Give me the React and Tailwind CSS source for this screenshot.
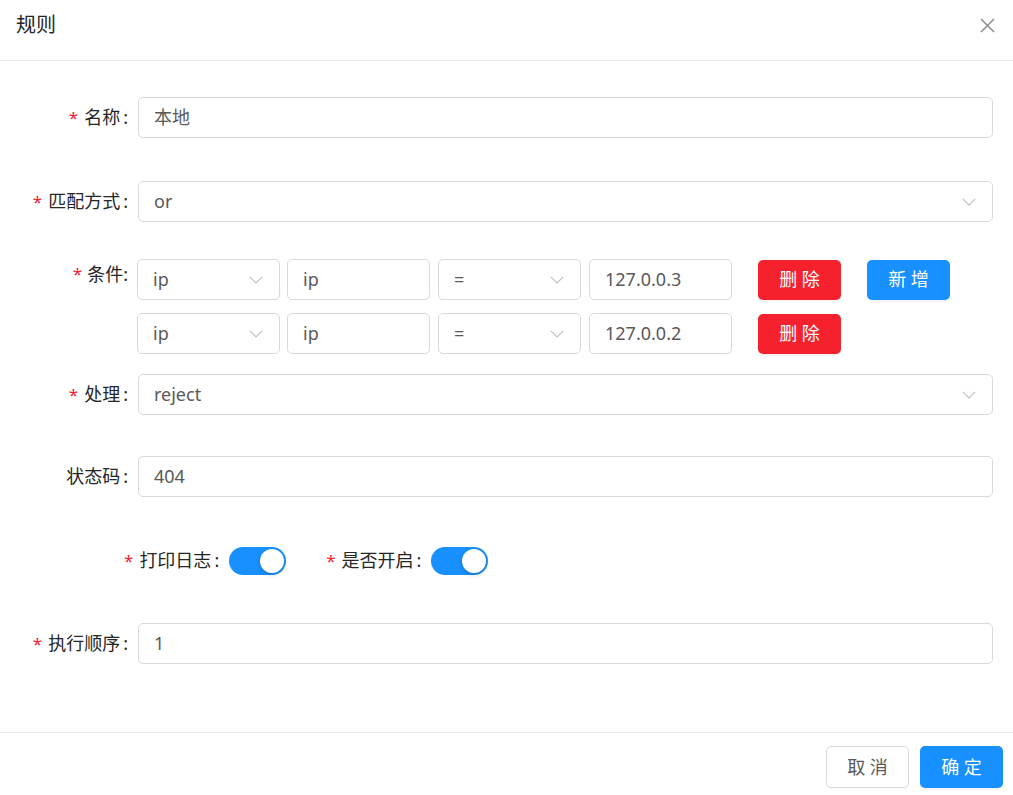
import React from "react";

const FONT = "font-['Noto_Sans','Noto_Sans_CJK_SC',sans-serif]";

function Chevron() {
  return (
    <svg width="14" height="8" viewBox="0 0 14 8" fill="none">
      <polyline points="0.8,0.8 7,7 13.2,0.8" stroke="#bfbfbf" strokeWidth="1.2" />
    </svg>
  );
}

function Label({ req, text }) {
  return (
    <div className="w-[138px] shrink-0 flex justify-end items-center text-[18px] text-[#262626]">
      {req && <span className="text-[#f5222d] mr-[6px] text-[17px]">*</span>}
      <span>{text}</span>
      <span className="ml-[3px] mr-[10px]">:</span>
    </div>
  );
}

function Box({ children, select, className = "" }) {
  return (
    <div
      className={
        "h-[41px] border border-[#d9d9d9] rounded-[5px] flex items-center justify-between pl-[15px] pr-[16px] text-[18px] text-[#595959] bg-white " +
        className
      }
    >
      <span>{children}</span>
      {select && <Chevron />}
    </div>
  );
}

function Btn({ color, children }) {
  return (
    <div
      className={
        "h-[40px] w-[83px] rounded-[5px] flex items-center justify-center text-white text-[18px] shadow-[0_2px_0_rgba(0,0,0,0.045)] " +
        color
      }
    >
      {children}
    </div>
  );
}

function Switch() {
  return (
    <div className="w-[57px] h-[28px] rounded-full bg-[#1890ff] relative shrink-0">
      <div className="absolute right-[2px] top-[2px] w-[24px] h-[24px] rounded-full bg-white shadow-[0_2px_4px_rgba(0,35,11,0.2)]" />
    </div>
  );
}

function CondRow({ ip, add }) {
  return (
    <div className="flex items-center">
      <Box select className="w-[143px]">ip</Box>
      <Box className="w-[143px] ml-[7px]">ip</Box>
      <Box select className="w-[143px] ml-[8px]">=</Box>
      <Box className="w-[143px] ml-[8px]">{ip}</Box>
      <div className="ml-[26px]">
        <Btn color="bg-[#f5222d]">删 除</Btn>
      </div>
      {add && (
        <div className="ml-[26px]">
          <Btn color="bg-[#1890ff]">新 增</Btn>
        </div>
      )}
    </div>
  );
}

export default function App() {
  return (
    <div className={"w-[1013px] h-[795px] bg-white overflow-hidden flex flex-col " + FONT}>
      <div className="h-[61px] border-b border-[#e8e8e8] flex items-center justify-between pl-[16px] pr-[18px] pb-[10px] shrink-0">
        <div className="text-[20px] text-[#262626]">规则</div>
        <svg width="15" height="15" viewBox="0 0 15 15">
          <path d="M1 1L14 14M14 1L1 14" stroke="#8c8c8c" strokeWidth="1.5" />
        </svg>
      </div>

      <div className="flex flex-col pt-[36px] pr-[20px] h-[671px] shrink-0">
        <div className="flex items-center">
          <Label req text="名称" />
          <Box className="flex-1">本地</Box>
        </div>

        <div className="flex items-center mt-[43px]">
          <Label req text="匹配方式" />
          <Box select className="flex-1">or</Box>
        </div>

        <div className="flex mt-[37px]">
          <div className="w-[137px] shrink-0 flex justify-end items-start pt-[2px] pr-[9px] text-[18px] text-[#262626]">
            <span className="text-[#f5222d] mr-[5px] text-[17px]">*</span>
            <span>条件:</span>
          </div>
          <div className="flex flex-col gap-[13px]">
            <CondRow ip="127.0.0.3" add />
            <CondRow ip="127.0.0.2" />
          </div>
        </div>

        <div className="flex items-center mt-[20px]">
          <Label req text="处理" />
          <Box select className="flex-1">reject</Box>
        </div>

        <div className="flex items-center mt-[41px]">
          <Label text="状态码" />
          <Box className="flex-1">404</Box>
        </div>

        <div className="flex items-center mt-[43px] h-[41px] ml-[124px] text-[18px] text-[#262626]">
          <span className="text-[#f5222d] mr-[6px] text-[17px]">*</span>
          <span>打印日志</span>
          <span className="ml-[3px] mr-[10px]">:</span>
          <Switch />
          <span className="text-[#f5222d] mr-[6px] ml-[40px] text-[17px]">*</span>
          <span>是否开启</span>
          <span className="ml-[3px] mr-[10px]">:</span>
          <Switch />
        </div>

        <div className="flex items-center mt-[42px]">
          <Label req text="执行顺序" />
          <Box className="flex-1">1</Box>
        </div>
      </div>

      <div className="border-t border-[#e8e8e8] flex justify-end items-start pt-[13px] pr-[10px] gap-[11px] flex-1">
        <div className="h-[42px] w-[83px] rounded-[5px] border border-[#d9d9d9] bg-white flex items-center justify-center text-[18px] text-[#595959] shadow-[0_2px_0_rgba(0,0,0,0.015)]">
          取 消
        </div>
        <div className="h-[42px] w-[83px] rounded-[5px] bg-[#1890ff] flex items-center justify-center text-[18px] text-white shadow-[0_2px_0_rgba(0,0,0,0.045)]">
          确 定
        </div>
      </div>
    </div>
  );
}
